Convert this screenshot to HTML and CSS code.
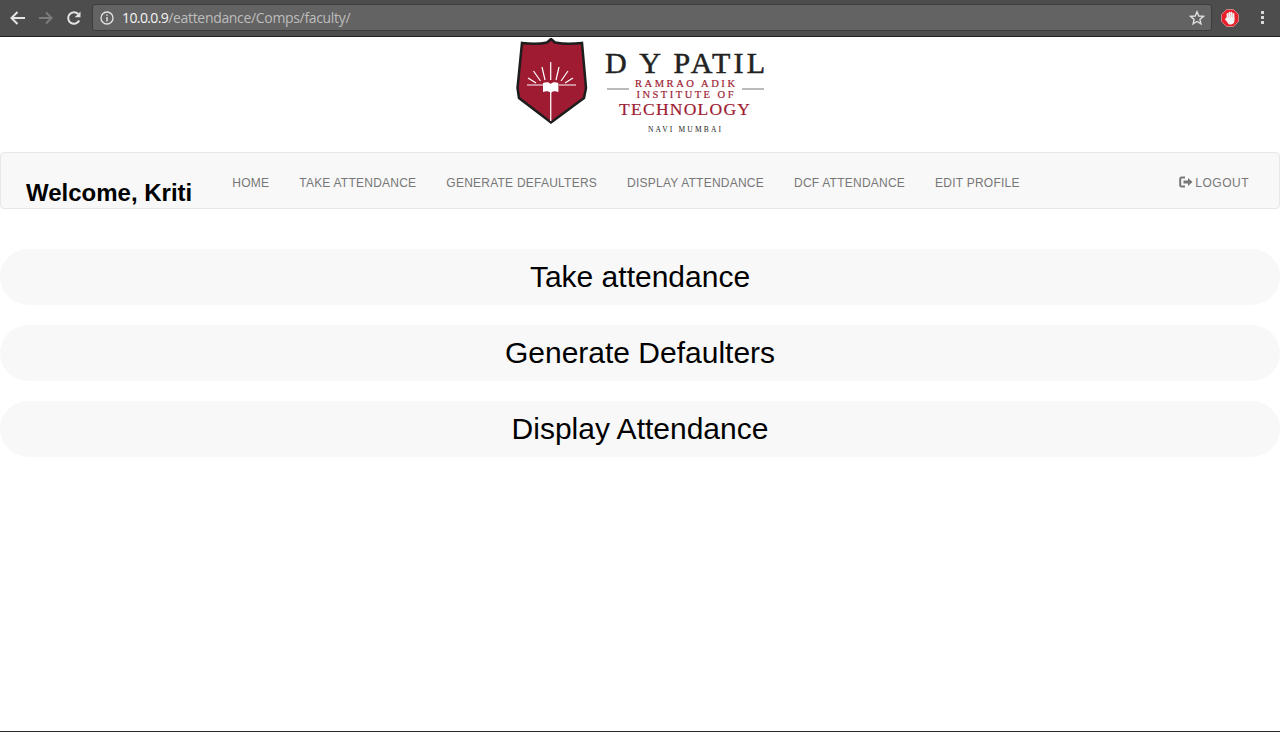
FILE: index.html
```html
<!DOCTYPE html>
<html lang="en">
<head>
    <meta charset="UTF-8">
    <title>eAttendance</title>
    <link rel="stylesheet" href="styles.css">
</head>
<body>
    <div class="browser-bar">
        <svg class="tool-icon" width="18" height="18" viewBox="0 0 18 18"><path d="M15 9H2.500M7.500 3 1.500 9l6 6" fill="none" stroke="#e4e4e4" stroke-width="2"/></svg>
        <svg class="tool-icon" width="18" height="18" viewBox="0 0 18 18"><path d="M2 9h12M9 3.500 14.500 9 9 14.500" fill="none" stroke="#7c7c7c" stroke-width="2"/></svg>
        <svg class="tool-icon" width="18" height="18" viewBox="0 0 18 18"><path d="M15.200 11.500A5.800 5.800 0 1 1 14.200 5" fill="none" stroke="#e4e4e4" stroke-width="2"/><path d="M16.500 2.500v5.800H10.700z" fill="#e4e4e4"/></svg>
        <div class="address">
            <svg class="info-icon" width="14" height="14" viewBox="0 0 14 14"><circle cx="7" cy="7" r="6" fill="none" stroke="#e4e4e4" stroke-width="1.300"/><path d="M6.300 3.400h1.400v1.400H6.300zM6.300 6h1.400v4.600H6.300z" fill="#e4e4e4"/></svg>
            <span class="host">10.0.0.9</span><span class="path">/eattendance/Comps/faculty/</span>
            <svg class="star-icon" width="16" height="16" viewBox="0 0 16 16"><path d="M8 1.800 9.800 6l4.600.4-3.500 3 1 4.500L8 11.500 4.100 13.900l1-4.500-3.500-3L6.200 6z" fill="none" stroke="#e0e0e0" stroke-width="1.400"/></svg>
        </div>
        <svg class="ext-icon" width="18" height="18" viewBox="0 0 18 18">
            <path d="M5.500 .5h7l5 5v7l-5 5h-7l-5-5v-7z" fill="#e8202a" stroke="#e9b9bb" stroke-width=".6"/>
            <path d="M6.500 5v5M8.500 3.700V9M10.500 3.700V9M12.500 5v5" stroke="#f2f2f2" stroke-width="1.800" stroke-linecap="round"/>
            <path d="M5.600 8.500h7.800V12c0 2.300-1.700 3.500-3.700 3.500-1.800 0-2.800-.9-3.400-2.300L3.900 10.200l.8-.9z" fill="#f2f2f2"/>
        </svg>
        <div class="menu-dots"><i></i><i></i><i></i></div>
    </div>

    <header class="logo-row">
        <svg class="logo" width="250" height="96" viewBox="0 0 250 96">
            <path d="M35 1 39 4.500C47 6 57 6 66 5L70 50 68 60 35 84.500 3 60 1.500 50 6 5C15 6 24 6 31 4.500z" fill="#9e1b32" stroke="#1d1d1d" stroke-width="2.500"/>
            <path d="M34 50h1.400v33H34z" fill="#f3e6e8"/>
            <path d="M27 45c3-1 6-1 7.700 1 1.700-2 4.700-2 7.700-1v9c-3-1-6-1-7.700 1-1.700-2-4.700-2-7.700-1z" fill="#fff"/>
            <path d="M34.700 42V24M29 42l-3-13M40 42l3-13M24.500 43l-7-10M45 43l7-10M20 45l-8-5M49 45l8-5M27 47H11M43 47h17" stroke="#fff" stroke-width="1.200"/>
            <text class="logo-title" x="89" y="35" textLength="160">D Y PATIL</text>
            <path d="M91 51h22M226 51h22" stroke="#777" stroke-width="1"/>
            <text class="logo-small logo-red" x="169" y="49" textLength="100">RAMRAO ADIK</text>
            <text class="logo-small logo-red" x="169" y="60" textLength="97">INSTITUTE OF</text>
            <text class="logo-tech" x="168.500" y="77" textLength="131">TECHNOLOGY</text>
            <text class="logo-navi" x="168.500" y="94" textLength="73">NAVI MUMBAI</text>
        </svg>
    </header>

    <nav class="navbar">
        <h2 class="welcome">Welcome, Kriti</h2>
        <ul class="nav-links">
            <li><a href="#">Home</a></li>
            <li><a href="#">Take Attendance</a></li>
            <li><a href="#">Generate Defaulters</a></li>
            <li><a href="#">Display Attendance</a></li>
            <li><a href="#">DCF Attendance</a></li>
            <li><a href="#">Edit Profile</a></li>
        </ul>
        <a class="logout" href="#"><svg width="14" height="12" viewBox="0 0 14 12"><path d="M6 1.500H2.500A1.300 1.300 0 0 0 1.200 2.800v6.400a1.300 1.300 0 0 0 1.300 1.300H6" fill="none" stroke="#777" stroke-width="2"/><path d="M4.500 4.500H9V2l4.500 4L9 10V7.500H4.500z" fill="#777"/></svg>Logout</a>
    </nav>

    <main class="actions">
        <a class="action" href="#">Take attendance</a>
        <a class="action" href="#">Generate Defaulters</a>
        <a class="action" href="#">Display Attendance</a>
    </main>

    <div class="bottom-line"></div>
</body>
</html>
```

FILE: styles.css
```css
* {
    box-sizing: border-box;
}

body {
    margin: 0;
    height: 100vh;
    display: flex;
    flex-direction: column;
    overflow: hidden;
    background: #fff;
    font-family: "Liberation Sans", Arial, sans-serif;
}

a {
    text-decoration: none;
}

.browser-bar {
    height: 37px;
    flex-shrink: 0;
    display: flex;
    align-items: center;
    padding: 0 9px 1px 10px;
    background: #4d4d4d;
    border-bottom: 1px solid #222;
}

.tool-icon {
    margin-right: 9px;
}

.address {
    flex: 1;
    height: 27px;
    margin-left: 1px;
    display: flex;
    align-items: center;
    padding: 0 6px 0 7px;
    background: #636363;
    border: 1px solid #3c3c3c;
    border-radius: 3px;
    font-family: "Open Sans", sans-serif;
    font-size: 14px;
}

.info-icon {
    margin-right: 8px;
}

.host {
    color: #f4f4f4;
    letter-spacing: -0.6px;
}

.path {
    color: #bdbdbd;
    letter-spacing: -0.33px;
}

.star-icon {
    margin-left: auto;
}

.ext-icon {
    margin-left: 9px;
}

.menu-dots {
    width: 3px;
    margin: 0 7px 0 22px;
    display: flex;
    flex-direction: column;
    gap: 2px;
}

.menu-dots i {
    height: 3px;
    background: #d8d8d8;
}

.logo-row {
    height: 115px;
    flex-shrink: 0;
    display: flex;
    justify-content: center;
}

.logo {
    margin: 1px 0 0 2px;
}

.logo text {
    text-anchor: middle;
    font-family: "Liberation Serif", serif;
}

.logo .logo-title {
    text-anchor: start;
    font-size: 30px;
    fill: #222;
    stroke: #222;
    stroke-width: 0.5px;
}

.logo-small {
    font-size: 10.500px;
    stroke-width: 0.2px;
}

.logo-red {
    fill: #9e1b32;
    stroke: #9e1b32;
}

.logo-tech {
    font-size: 17.500px;
    fill: #9e1b32;
    stroke: #9e1b32;
    stroke-width: 0.2px;
}

.logo-navi {
    font-size: 7.500px;
    fill: #222;
}

.navbar {
    height: 57px;
    flex-shrink: 0;
    display: flex;
    background: #f8f8f8;
    border: 1px solid #e7e7e7;
    border-radius: 4px;
    padding: 0 15px 0 25px;
}

.welcome {
    margin: 26px 25px 0 0;
    font-size: 24px;
    line-height: 28px;
    font-weight: bold;
    color: #000;
}

.nav-links {
    list-style: none;
    margin: 0;
    padding: 0;
    display: flex;
}

.nav-links a,
.logout {
    display: block;
    padding: 0 15px;
    line-height: 61px;
    font-size: 12px;
    letter-spacing: 0.235px;
    text-transform: uppercase;
    color: #777;
}

.logout {
    margin-left: auto;
    letter-spacing: 0.5px;
}

.logout svg {
    margin-right: 2px;
    vertical-align: -1px;
}

.actions {
    flex: 1;
    display: flex;
    flex-direction: column;
    gap: 20px;
    padding-top: 40px;
}

.action {
    height: 56px;
    display: block;
    background: #f8f8f8;
    border-radius: 28px;
    text-align: center;
    font-size: 30px;
    line-height: 56px;
    color: #000;
}

.bottom-line {
    height: 1px;
    flex-shrink: 0;
    background: #2a2a2a;
}
```
